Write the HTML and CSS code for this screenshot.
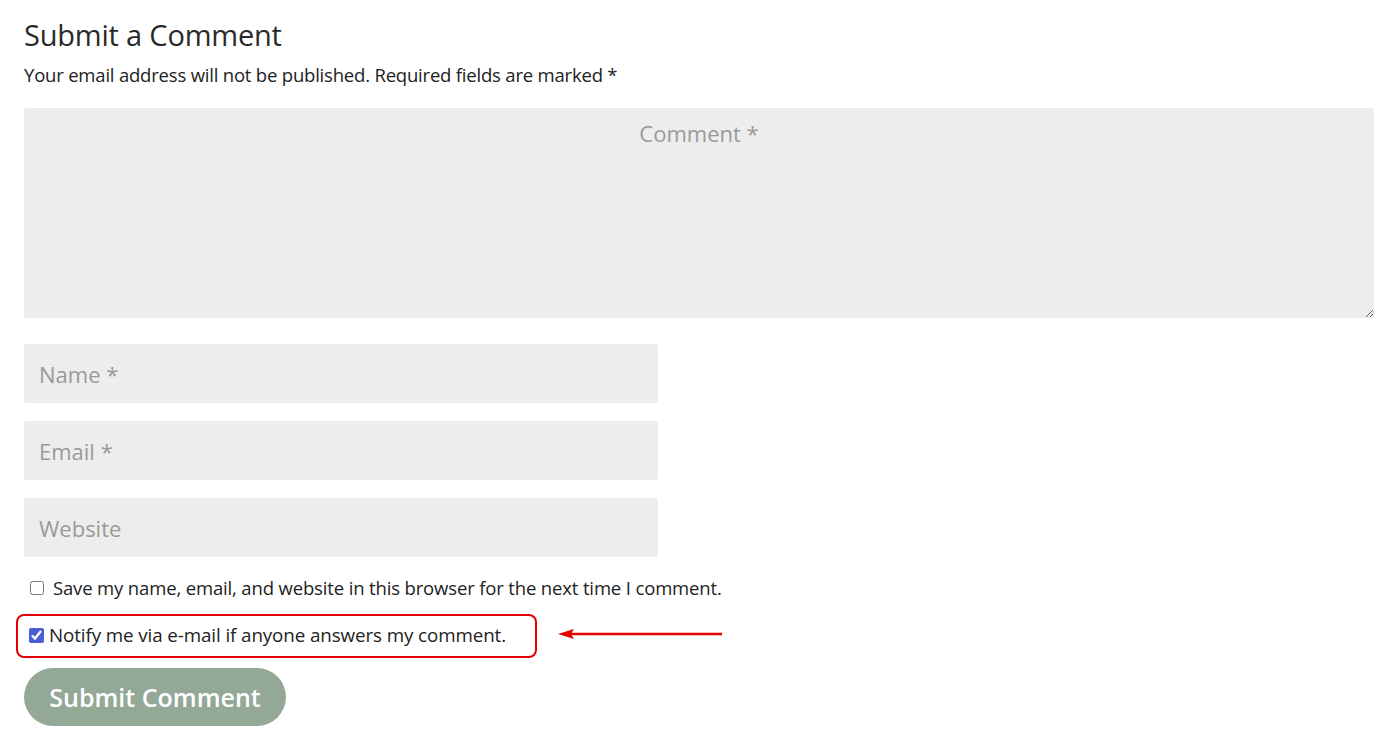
FILE: index.html
```html
<!DOCTYPE html>
<html lang="en">
<head>
    <meta charset="UTF-8">
    <title>Submit a Comment</title>
    <link rel="stylesheet" href="styles.css">
</head>
<body>
    <div id="respond">
        <h3 class="reply-title">Submit a Comment</h3>
        <p class="notes">Your email address will not be published. Required fields are marked *</p>

        <form class="comment-form">
            <textarea class="comment-field" placeholder="Comment *"></textarea>

            <input type="text" class="text-field" placeholder="Name *">
            <input type="text" class="text-field" placeholder="Email *">
            <input type="text" class="text-field" placeholder="Website">

            <label class="cookies-consent">
                <input type="checkbox">
                <span>Save my name, email, and website in this browser for the next time I comment.</span>
            </label>

            <div class="notify-row">
                <label class="notify-box">
                    <input type="checkbox" checked>
                    <span>Notify me via e-mail if anyone answers my comment.</span>
                </label>
                <svg class="arrow" width="170" height="16" viewBox="0 0 170 16">
                    <line x1="14" y1="8" x2="166" y2="8" stroke="#e00000" stroke-width="2.5"/>
                    <path d="M2 8 L18 3 L15 8 L18 13 Z" fill="#e00000"/>
                </svg>
            </div>

            <button type="submit" class="submit-btn">Submit Comment</button>
        </form>
    </div>
</body>
</html>
```

FILE: styles.css
```css
* {
    box-sizing: border-box;
}

body {
    margin: 0;
    padding: 18px 19px 0 24px;
    font-family: 'Open Sans', 'Liberation Sans', sans-serif;
    color: #333;
    background: #fff;
}

.reply-title {
    margin: 0;
    font-size: 29px;
    font-weight: 500;
    line-height: 34px;
    color: #2a2a2a;
    letter-spacing: -0.2px;
}

.notes {
    margin: 10px 0 20px;
    font-size: 18.5px;
    font-weight: 500;
    line-height: 26px;
    color: #222;
    letter-spacing: -0.2px;
}

.comment-form {
    display: flex;
    flex-direction: column;
    align-items: flex-start;
}

.comment-field {
    width: 100%;
    height: 210px;
    border: none;
    border-radius: 3px;
    background: #ededed;
    padding: 10px 15px;
    font-family: inherit;
    font-size: 22px;
    text-align: center;
    margin: 0 0 26px;
    resize: vertical;
}

.text-field {
    width: 634px;
    height: 59px;
    border: none;
    border-radius: 3px;
    background: #ededed;
    padding: 0 15px;
    font-family: inherit;
    font-size: 22px;
    margin: 0 0 18px;
}

.text-field:last-of-type {
    margin-bottom: 0;
}

::placeholder {
    color: #9a9a9a;
    opacity: 1;
}

.cookies-consent {
    display: flex;
    align-items: center;
    gap: 9px;
    margin: 18px 0 0 6px;
    font-size: 18.5px;
    font-weight: 500;
    line-height: 26px;
    color: #222;
    letter-spacing: -0.15px;
}

.cookies-consent input {
    width: 14px;
    height: 14px;
    margin: 0;
}

.notify-box input {
    width: 15px;
    height: 15px;
    margin: 0;
    accent-color: #4a5fd6;
}

.notify-row {
    display: flex;
    align-items: center;
    margin: 13px 0 0 -8px;
}

.notify-box {
    display: flex;
    align-items: center;
    gap: 5px;
    width: 521px;
    height: 44px;
    padding: 0 0 2px 11px;
    border: 2px solid #e00000;
    border-radius: 8px;
    font-size: 18.8px;
    font-weight: 500;
    color: #222;
    letter-spacing: -0.1px;
}

.arrow {
    margin: -4px 0 0 19px;
}

.submit-btn {
    margin-top: 10px;
    width: 262px;
    height: 58px;
    border: none;
    border-radius: 29px;
    background: #94a898;
    color: #fff;
    font-family: inherit;
    font-size: 25px;
    font-weight: 600;
    cursor: pointer;
}
```
